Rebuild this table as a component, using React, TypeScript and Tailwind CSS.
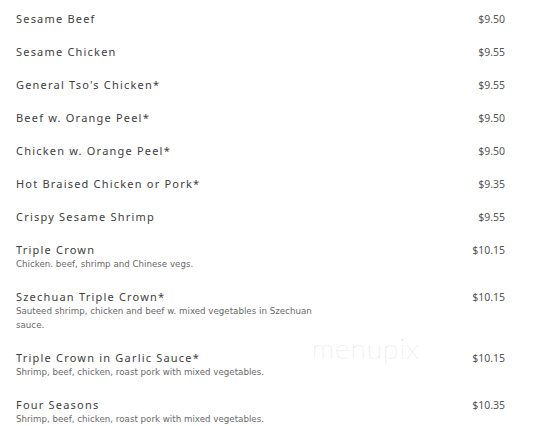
const items: { name: string; price: string; desc?: string }[] = [
  { name: "Sesame Beef", price: "$9.50" },
  { name: "Sesame Chicken", price: "$9.55" },
  { name: "General Tso's Chicken*", price: "$9.55" },
  { name: "Beef w. Orange Peel*", price: "$9.50" },
  { name: "Chicken w. Orange Peel*", price: "$9.50" },
  { name: "Hot Braised Chicken or Pork*", price: "$9.35" },
  { name: "Crispy Sesame Shrimp", price: "$9.55" },
  { name: "Triple Crown", price: "$10.15", desc: "Chicken. beef, shrimp and Chinese vegs." },
  {
    name: "Szechuan Triple Crown*",
    price: "$10.15",
    desc: "Sauteed shrimp, chicken and beef w. mixed vegetables in Szechuan sauce.",
  },
  {
    name: "Triple Crown in Garlic Sauce*",
    price: "$10.15",
    desc: "Shrimp, beef, chicken, roast pork with mixed vegetables.",
  },
  { name: "Four Seasons", price: "$10.35", desc: "Shrimp, beef, chicken, roast pork with mixed vegetables." },
];

export default function App() {
  return (
    <div className="relative w-[544px] h-[426px] overflow-hidden bg-white pt-[12px] pl-[16px] font-['Noto_Sans',sans-serif]">
      {items.map((item) => (
        <div key={item.name} className="flex mb-[19px]">
          <div className="w-[305px]">
            <div className="text-[11px] leading-[14px] tracking-[1.2px] text-[#404040]">{item.name}</div>
            {item.desc && (
              <div className="text-[8.7px] leading-[14px] text-[#6a6a6a] font-['DejaVu_Sans',sans-serif]">
                {item.desc}
              </div>
            )}
          </div>
          <div className="w-[184px] text-right text-[10.5px] leading-[14px] text-[#555]">{item.price}</div>
        </div>
      ))}
      {/* watermark */}
      <div className="absolute left-[312px] top-[327px] text-[28px] font-extralight tracking-[1px] text-[#d6d6d6] font-['Lato',sans-serif]">
        menupix
      </div>
    </div>
  );
}
